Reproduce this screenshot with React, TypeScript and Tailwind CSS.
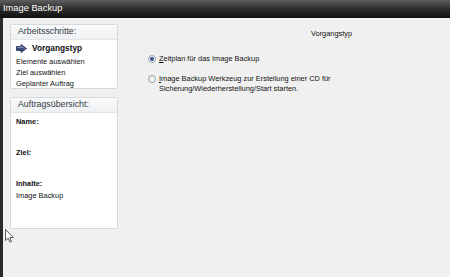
import React from 'react';

const font = { fontFamily: '"Liberation Sans", Arial, sans-serif' };

function Panel({ title, children, className }: { title: string; children: React.ReactNode; className: string }) {
  return (
    <div className={`flex flex-col rounded-[2px] border border-[#d4d9de] bg-white ${className}`}>
      <div className="flex h-[15px] shrink-0 items-center border-b border-[#e3e6e8] bg-gradient-to-b from-[#fbfbfb] to-[#eef0f2] pl-[7px] text-[8.8px] text-[#2e3a45]">
        {title}
      </div>
      {children}
    </div>
  );
}

function Radio({ checked }: { checked?: boolean }) {
  return (
    <span className="mt-[1px] flex h-[8px] w-[8px] shrink-0 items-center justify-center rounded-full border border-[#9aa3ad] bg-gradient-to-br from-[#e3e6ea] to-[#ffffff]">
      {checked ? <span className="h-[4px] w-[4px] rounded-full bg-[#33508f]" /> : null}
    </span>
  );
}

export default function App() {
  return (
    <div className="relative flex h-[277px] w-[450px] flex-col overflow-hidden text-[7.4px] text-[#111]" style={font}>
      <div className="flex h-[18px] shrink-0 items-center bg-gradient-to-b from-[#5e5e5e] via-[#2c2c2c] to-[#111111] pl-[3px] text-[9.3px] text-white">
        Image Backup
      </div>
      <div className="flex flex-1">
        <div className="w-[3px] bg-[#2a2a2a]" />
        <div className="flex flex-1 bg-[#f0f0f0]">
          <div className="ml-[7px] mt-[6px] flex w-[108px] flex-col gap-[8px]">
            <Panel title="Arbeitsschritte:" className="h-[65px]">
              <div className="flex flex-col pl-[5px] pt-[3px] leading-[11px]">
                <div className="flex items-center gap-[5px] text-[8.3px] font-bold">
                  <svg width="11" height="9" viewBox="0 0 11 9">
                    <path d="M0.5 2.5h4.5v-2l5.5 4-5.5 4v-2h-4.5z" fill="#3b4a78" stroke="#1f2a50" strokeWidth="0.8" />
                    <path d="M1.5 3.5h4v-1.2l3.2 2.2" fill="none" stroke="#9aa8d8" strokeWidth="0.8" />
                  </svg>
                  Vorgangstyp
                </div>
                <div className="mt-[2px]">Elemente auswählen</div>
                <div>Ziel auswählen</div>
                <div>Geplanter Auftrag</div>
              </div>
            </Panel>
            <Panel title="Auftragsübersicht:" className="h-[132px]">
              <div className="flex flex-col pl-[5px] pt-[3px] leading-[11px]">
                <div className="h-[31px] font-bold">Name:</div>
                <div className="h-[31px] font-bold">Ziel:</div>
                <div className="font-bold">Inhalte:</div>
                <div className="mt-[1px]">Image Backup</div>
              </div>
            </Panel>
          </div>
          <div className="flex flex-1 flex-col pl-[30px] pt-[10px] leading-[10px]">
            <div className="pl-[163px] leading-[11px]">Vorgangstyp</div>
            <div className="mt-[15px] flex gap-[3px]">
              <Radio checked />
              <span><u>Z</u>eitplan für das Image Backup</span>
            </div>
            <div className="mt-[9.5px] flex gap-[3px]">
              <Radio />
              <span>
                <u>I</u>mage Backup Werkzeug zur Erstellung einer CD für
                <br />
                Sicherung/Wiederherstellung/Start starten.
              </span>
            </div>
          </div>
        </div>
      </div>
      <svg className="absolute left-[5px] top-[229px]" width="9" height="14" viewBox="0 0 9 14">
        <path d="M0.5 0.5v11l2.6-2.4 1.8 4 1.6-0.7-1.8-3.9h3.6z" fill="#ffffff" stroke="#333333" strokeWidth="0.8" />
      </svg>
    </div>
  );
}
